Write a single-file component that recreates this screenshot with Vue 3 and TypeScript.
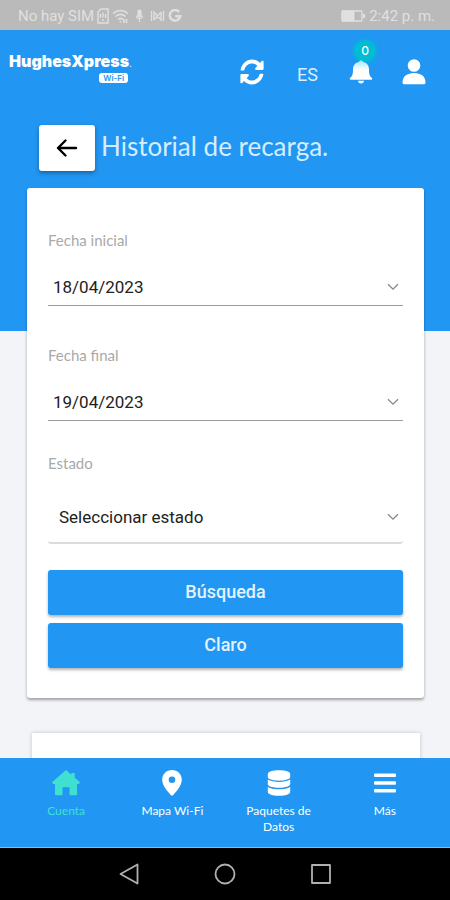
<script setup lang="ts">
import { ref } from 'vue'

interface DateField {
  id: string
  label: string
  value: string
}

interface Tab {
  id: string
  label: string
  active: boolean
}

const dates = ref<DateField[]>([
  { id: 'fecha-inicial', label: 'Fecha inicial', value: '18/04/2023' },
  { id: 'fecha-final', label: 'Fecha final', value: '19/04/2023' },
])

const estado = ref<string>('')
const notifications = ref<number>(0)

const tabs: Tab[] = [
  { id: 'home', label: 'Cuenta', active: true },
  { id: 'map', label: 'Mapa Wi-Fi', active: false },
  { id: 'data', label: 'Paquetes de Datos', active: false },
  { id: 'more', label: 'Más', active: false },
]

function clearForm(): void {
  dates.value.forEach((field) => (field.value = ''))
  estado.value = ''
}
</script>

<template>
  <div class="screen">
    <div class="status">
      <div class="status-group">
        <span>No hay SIM</span>
        <svg width="12" height="16" viewBox="0 0 12 16" fill="none" stroke="currentColor" stroke-width="1.4">
          <path d="M1 4l3-3h7v14H1z" />
          <path d="M6 4.500v5M6 11v2M3.500 6v4M8.500 6v4" />
        </svg>
        <svg class="wifi" width="17" height="16" viewBox="0 0 17 16" fill="none" stroke="currentColor" stroke-width="1.600">
          <path d="M1 5.500c4.500-4 10.500-4 15 0M3.500 8.500c3-2.600 7-2.600 10 0M6 11.500c1.500-1.300 3.500-1.300 5 0" />
          <path d="M8.500 13v1.500M12 11v4M14.500 11v4" />
        </svg>
        <svg class="mic" width="9" height="16" viewBox="0 0 9 16" fill="none" stroke="currentColor" stroke-width="1.200">
          <rect x="3" y="2" width="3" height="7" rx="1.500" fill="currentColor" />
          <path d="M1.500 7.500c0 4 6 4 6 0M4.500 10.500V14" />
        </svg>
        <svg width="15" height="14" viewBox="0 0 15 14" fill="none" stroke="currentColor" stroke-width="1.300">
          <path d="M1.500 2v10M4 11V3l7 8V3M4 11l7-8M13.500 2v10" />
        </svg>
        <svg width="14" height="14" viewBox="0 0 14 14" fill="none" stroke="currentColor" stroke-width="2.400">
          <path d="M11.200 3A5.300 5.300 0 1 0 12.300 7.300H7.200" />
        </svg>
      </div>
      <div class="status-group">
        <svg width="24" height="12" viewBox="0 0 24 12" fill="none" stroke="currentColor">
          <rect x="1" y="1" width="20" height="10" rx="1" stroke-width="1.300" />
          <rect x="1" y="1" width="12" height="10" fill="currentColor" />
          <path d="M23 4v4" stroke-width="2" />
        </svg>
        <span class="clock">2:42 p. m.</span>
      </div>
    </div>

    <main class="content">
      <section class="hero">
        <header class="topbar">
          <a class="brand" href="#" aria-label="HughesXpress Wi-Fi">
            <span class="brand-name">HughesXpress<span class="brand-mark">.</span></span>
            <span class="brand-pill">Wi-Fi</span>
          </a>
          <div class="actions">
            <button class="icon-button" type="button" aria-label="Actualizar">
              <svg width="24" height="26" viewBox="0 0 512 512" preserveAspectRatio="none" fill="currentColor">
                <path d="M370.700 133.300C339.500 104 298.900 88 255.800 88c-77.500.1-144.300 53.200-162.800 126.900-1.300 5.400-6.100 9.100-11.700 9.100H24.100c-7.500 0-13.200-6.800-11.800-14.200C33.900 94.900 134.800 8 256 8c66.400 0 126.800 26.100 171.300 68.700L463 41c15.100-15.100 41-4.400 41 17v134c0 13.300-10.700 24-24 24H346c-21.400 0-32.100-25.900-17-41l41.700-41.700zM32 296h134c21.400 0 32.100 25.900 17 41l-41.800 41.800c31.300 29.300 71.800 45.300 114.900 45.200 77.400-.1 144.300-53.100 162.800-126.800 1.300-5.400 6.100-9.100 11.700-9.100h57.300c7.500 0 13.200 6.800 11.800 14.200C478.100 417.100 377.200 504 256 504c-66.400 0-126.800-26.100-171.300-68.700L49 471c-15.100 15.100-41 4.400-41-17V320c0-13.300 10.700-24 24-24z" />
              </svg>
            </button>
            <button class="language" type="button">ES</button>
            <button class="icon-button bell" type="button" aria-label="Notificaciones">
              <svg width="26" height="26" viewBox="0 0 26 26">
                <defs>
                  <linearGradient id="bell-tint" x1="0" y1="0" x2="0" y2="1">
                    <stop offset="0" stop-color="#a5e8f2" />
                    <stop offset=".5" stop-color="#fff" />
                  </linearGradient>
                </defs>
                <path fill="url(#bell-tint)" d="M13 1.500c1 0 1.700.5 1.700 1.300 4.300.9 6.300 3.900 6.300 7.700 0 5 .8 6.700 2.800 8.300.8.700.4 2-.6 2H2.800c-1 0-1.400-1.300-.6-2C4.200 17.200 5 15.500 5 10.500c0-3.800 2-6.800 6.300-7.700 0-.8.700-1.300 1.700-1.300z" />
                <path fill="#fff" d="M10 21.800h6c-.2 1.700-1.400 2.700-3 2.700s-2.800-1-3-2.700z" />
              </svg>
              <span class="badge">{{ notifications }}</span>
            </button>
            <button class="icon-button" type="button" aria-label="Perfil">
              <svg width="26" height="26" viewBox="0 0 26 26" fill="currentColor">
                <circle cx="13" cy="6.500" r="6.300" />
                <path d="M1.500 23.500c0-6 4.500-9.500 11.500-9.500s11.500 3.500 11.500 9.500c0 1.200-.7 1.800-2 1.800H3.500c-1.300 0-2-.6-2-1.800z" />
              </svg>
            </button>
          </div>
        </header>
        <div class="heading">
          <button class="back" type="button" aria-label="Volver">
            <svg width="22" height="20" viewBox="0 0 22 20" fill="none" stroke="currentColor" stroke-width="2.400" stroke-linecap="round" stroke-linejoin="round">
              <path d="M20 10H2M9.500 2.500L2 10l7.500 7.500" />
            </svg>
          </button>
          <h1>Historial de recarga.</h1>
        </div>
      </section>

      <form class="card" @submit.prevent>
        <div v-for="field in dates" :key="field.id" class="field">
          <label :for="field.id">{{ field.label }}</label>
          <div class="control">
            <input :id="field.id" v-model="field.value" type="text" inputmode="numeric" />
            <svg class="chevron" width="12" height="8" viewBox="0 0 12 8" fill="none" stroke="currentColor" stroke-width="1.300">
              <path d="M1 1.200l5 5 5-5" />
            </svg>
          </div>
        </div>
        <div class="field field-select">
          <label for="estado">Estado</label>
          <div class="control control-select">
            <select id="estado" v-model="estado">
              <option value="">Seleccionar estado</option>
            </select>
            <svg class="chevron" width="12" height="8" viewBox="0 0 12 8" fill="none" stroke="currentColor" stroke-width="1.300">
              <path d="M1 1.200l5 5 5-5" />
            </svg>
          </div>
        </div>
        <div class="buttons">
          <button type="submit">Búsqueda</button>
          <button type="button" @click="clearForm">Claro</button>
        </div>
      </form>

      <section class="results"></section>
    </main>

    <nav class="tabs">
      <a v-for="tab in tabs" :key="tab.id" href="#" :class="['tab', { active: tab.active }]">
        <svg v-if="tab.id === 'home'" width="28" height="26" viewBox="0 0 28 26" fill="currentColor">
          <path d="M14 0l5.500 4.800V3h3.300v4.700L28 12.300l-1.200 1.600H25V24c0 .8-.5 1.300-1.300 1.300h-6.200v-7c0-.7-.4-1.100-1-1.100h-5c-.6 0-1 .4-1 1.100v7H4.300C3.500 25.300 3 24.800 3 24V13.900H1.200L0 12.300z" />
        </svg>
        <svg v-else-if="tab.id === 'map'" width="20" height="26" viewBox="0 0 20 26" fill="currentColor" fill-rule="evenodd">
          <path d="M10 0c5.500 0 9.800 4.200 9.800 9.600C19.800 16 14 22 11 25.200c-.6.600-1.400.6-2 0C6 22 .2 16 .2 9.600.2 4.200 4.500 0 10 0zm0 6.400a3.300 3.300 0 1 0 0 6.600 3.300 3.300 0 0 0 0-6.600z" />
        </svg>
        <svg v-else-if="tab.id === 'data'" width="24" height="26" viewBox="0 0 24 26" fill="currentColor">
          <path d="M.8 4C.8 1.500 5.500.2 12 .2S23.200 1.500 23.200 4v3c0 2-4.700 3.700-11.200 3.700S.8 9 .8 7z" />
          <path d="M.8 9.600c2.400 1.600 6.500 2.400 11.200 2.400s8.800-.8 11.200-2.400V14c0 2.200-4.700 3.700-11.200 3.700S.8 16.200.8 14z" />
          <path d="M.8 17c2.400 1.600 6.500 2.300 11.200 2.300s8.800-.7 11.200-2.300v4.700c0 2.500-4.700 4-11.200 4s-11.200-1.500-11.200-4z" />
        </svg>
        <svg v-else width="24" height="26" viewBox="0 0 24 26" fill="currentColor">
          <rect x="1" y="3.500" width="22" height="3.600" rx="1" />
          <rect x="1" y="11.200" width="22" height="3.600" rx="1" />
          <rect x="1" y="18.900" width="22" height="3.600" rx="1" />
        </svg>
        <span>{{ tab.label }}</span>
      </a>
    </nav>

    <div class="system">
      <button type="button" aria-label="Atrás">
        <svg width="22" height="22" viewBox="0 0 22 22" fill="none" stroke="currentColor" stroke-width="1.800" stroke-linejoin="round">
          <path d="M19.500 1.500v19L2.500 11z" />
        </svg>
      </button>
      <button type="button" aria-label="Inicio">
        <svg width="22" height="22" viewBox="0 0 22 22" fill="none" stroke="currentColor" stroke-width="1.800">
          <circle cx="11" cy="11" r="9.500" />
        </svg>
      </button>
      <button type="button" aria-label="Recientes">
        <svg width="22" height="22" viewBox="0 0 22 22" fill="none" stroke="currentColor" stroke-width="1.800" stroke-linejoin="round">
          <rect x="2" y="2" width="18" height="18" />
        </svg>
      </button>
    </div>
  </div>
</template>

<style>
body {
  background: #f3f4f8;
}
</style>

<style scoped>
.screen {
  display: flex;
  flex-direction: column;
  height: 100vh;
  font-family: Roboto, 'Liberation Sans', sans-serif;
  color: #222;
}

.screen *,
.screen {
  box-sizing: border-box;
}

button {
  padding: 0;
  border: 0;
  background: none;
  color: inherit;
  font: inherit;
  cursor: pointer;
}

svg {
  display: block;
  flex: none;
}

a {
  color: inherit;
  text-decoration: none;
}

.status {
  display: flex;
  flex: none;
  align-items: center;
  justify-content: space-between;
  height: 30px;
  padding: 2px 15px 0 18px;
  background: #bababa;
  color: #e0e0e0;
  font-size: 15px;
}

.status-group {
  display: flex;
  align-items: center;
  gap: 4px;
}

.status-group:first-child {
  gap: 3px;
}

.mic {
  margin: 0 3px;
}

.content {
  flex: 1;
  min-height: 0;
  overflow-y: auto;
  scrollbar-width: none;
  background: #f3f4f8;
}

.hero {
  padding-bottom: 160px;
  background: #2196f3;
  color: #fff;
}

.topbar {
  display: flex;
  justify-content: space-between;
  height: 95px;
  padding: 21px 23px 0 9px;
}

.brand {
  display: flex;
  flex-direction: column;
  align-items: flex-end;
  height: 32px;
}

.brand-name {
  font-family: Inter, sans-serif;
  font-size: 16px;
  font-weight: 900;
  line-height: 20px;
}

.brand-mark {
  font-size: 10px;
  font-weight: 400;
}

.brand-pill {
  margin-right: 4px;
  padding: 0 4px;
  border-radius: 3px;
  background: #fff;
  color: #2196f3;
  font-family: Inter, sans-serif;
  font-size: 8px;
  font-weight: 600;
  line-height: 10px;
}

.actions {
  display: flex;
  align-items: center;
  height: 42px;
}

.language {
  margin: 5px 30px 0 33px;
  color: #dceeff;
  font-size: 18px;
}

.bell {
  position: relative;
  margin-right: 27px;
}

.badge {
  position: absolute;
  top: -19px;
  left: 6px;
  width: 22px;
  border-radius: 11px;
  background: radial-gradient(circle, #00bcd4 50%, rgba(0, 188, 212, 0.7));
  box-shadow: 0 0 4px 1px rgba(0, 188, 212, 0.7);
  font-family: Inter, sans-serif;
  font-size: 12px;
  font-weight: 500;
  line-height: 22px;
  text-align: center;
}

.bell svg {
  position: relative;
  z-index: 1;
}

.heading {
  display: flex;
  gap: 6px;
  padding: 0 39px;
}

.back {
  display: grid;
  place-items: center;
  width: 56px;
  height: 46px;
  border-radius: 3px;
  background: #fff;
  box-shadow: 0 2px 4px rgba(0, 0, 0, 0.35);
  color: #000;
}

h1 {
  margin: 0;
  color: #d5edff;
  font-family: Lato, sans-serif;
  font-size: 26px;
  font-weight: 400;
  line-height: 42px;
}

.card {
  position: relative;
  display: flex;
  flex-direction: column;
  margin: -143px 26px 0 27px;
  padding: 42px 21px 30px;
  border-radius: 3px;
  background: #fff;
  box-shadow: 0 2px 3px rgba(0, 0, 0, 0.35);
}

.field {
  display: flex;
  flex-direction: column;
  gap: 17px;
  margin-bottom: 39px;
}

.field-select {
  margin-top: -7px;
  margin-bottom: 26px;
}

label {
  color: #a9a9a9;
  font-family: Lato, sans-serif;
  font-size: 15px;
  line-height: 20px;
}

.control {
  display: flex;
  align-items: center;
  height: 39px;
  padding: 1px 4px 0 5px;
  border-bottom: 1px solid #9b9b9b;
}

.control-select {
  height: 54px;
  padding-left: 11px;
  border-bottom: 2px solid #dcdcdc;
  border-radius: 3px;
}

input,
select {
  flex: 1;
  min-width: 0;
  padding: 0;
  border: 0;
  outline: 0;
  appearance: none;
  background: transparent;
  color: #222;
  font: inherit;
  font-size: 17px;
}

.chevron {
  color: #888;
}

.buttons {
  display: grid;
  gap: 8px;
}

.buttons button {
  height: 45px;
  padding-bottom: 2px;
  border-radius: 3px;
  background: #2196f3;
  box-shadow: 0 2px 3px rgba(0, 0, 0, 0.3);
  color: #e3f3ff;
  font-size: 18px;
  font-weight: 500;
}

.results {
  height: 160px;
  margin: 35px 30px 0 32px;
  background: #fff;
  box-shadow: 0 0 4px rgba(0, 0, 0, 0.2);
}

.tabs {
  display: grid;
  flex: none;
  grid-template-columns: repeat(4, 1fr);
  height: 90px;
  padding: 12px 12px 0 13px;
  border-bottom: 1px solid #90b8d8;
  background: #2196f3;
  color: #fff;
}

.tab {
  display: flex;
  flex-direction: column;
  align-items: center;
  gap: 7px;
  padding: 0 16px;
  font-family: Lato, sans-serif;
  font-size: 12px;
  line-height: 16px;
  text-align: center;
}

.tab.active {
  color: #40e0d0;
}

.system {
  display: flex;
  flex: none;
  align-items: center;
  justify-content: center;
  gap: 74px;
  height: 52px;
  background: #000;
  color: #b0b0b0;
}
</style>
